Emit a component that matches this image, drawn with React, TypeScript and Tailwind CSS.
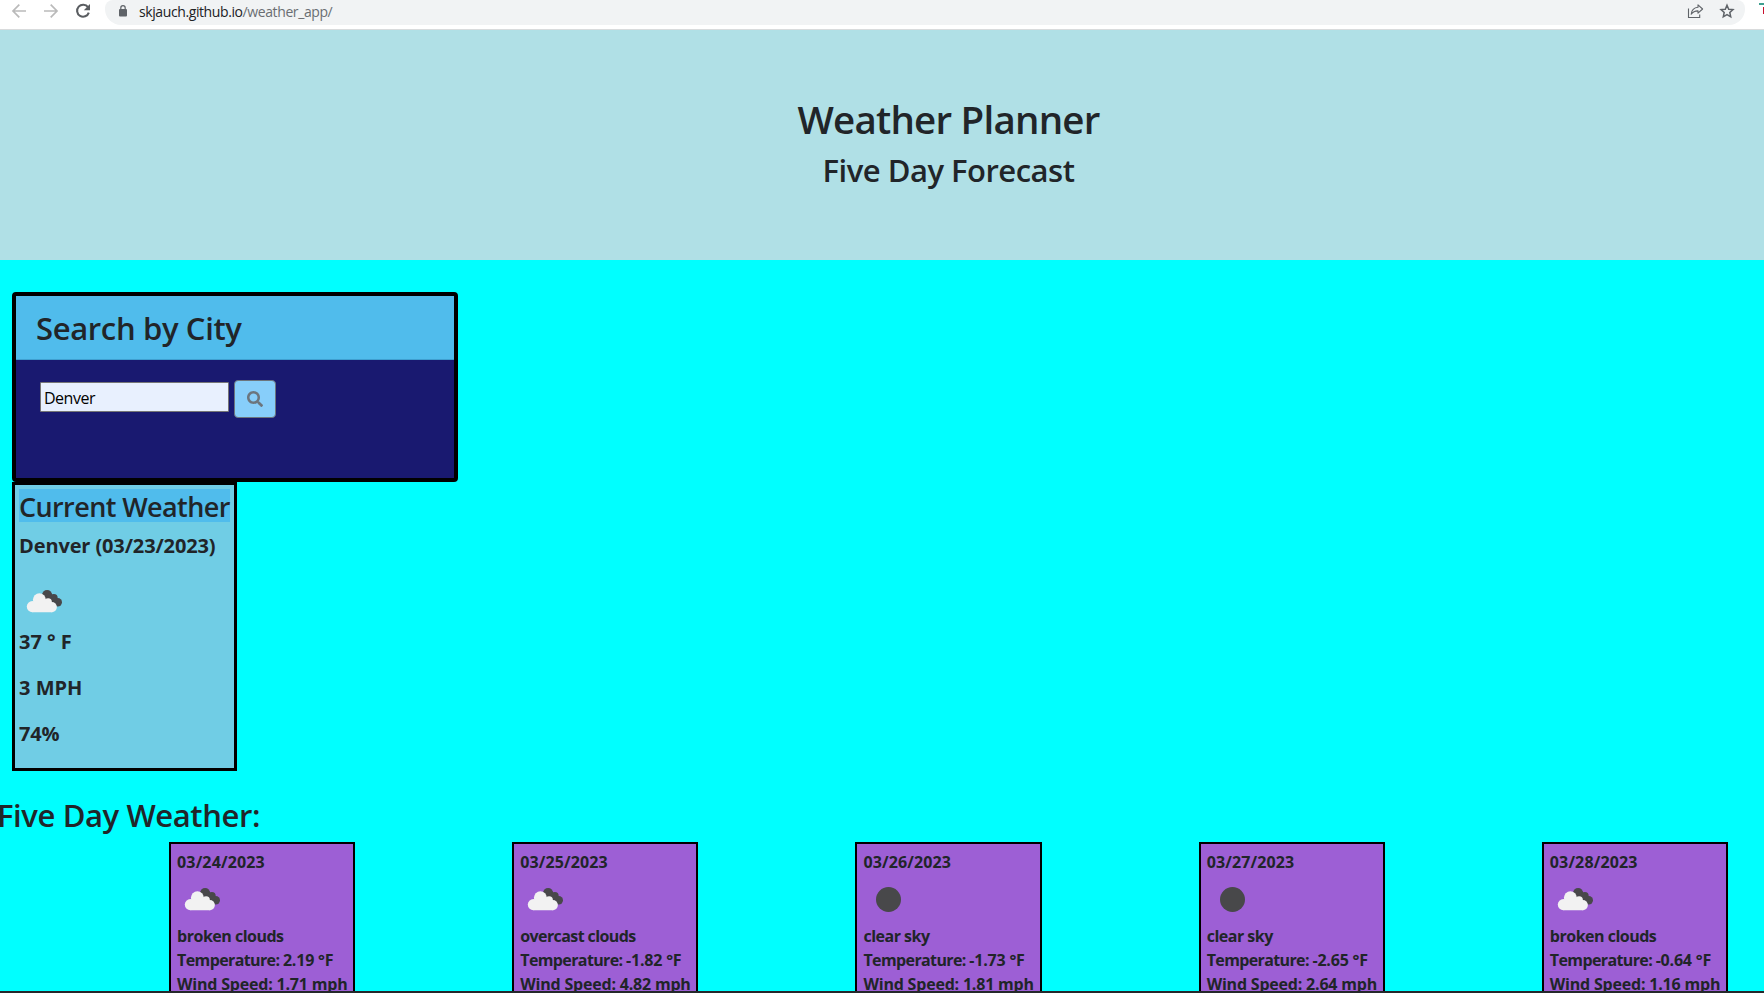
import { FaSearch } from "react-icons/fa";

type Sky = "clouds" | "clear";

interface Day {
  date: string;
  sky: Sky;
  description: string;
  descriptionTracking: string;
  temperature: string;
  wind: string;
}

const days: Day[] = [
  { date: "03/24/2023", sky: "clouds", description: "broken clouds", descriptionTracking: "tracking-[-0.5px]", temperature: "2.19", wind: "1.71" },
  { date: "03/25/2023", sky: "clouds", description: "overcast clouds", descriptionTracking: "tracking-[-0.6px]", temperature: "-1.82", wind: "4.82" },
  { date: "03/26/2023", sky: "clear", description: "clear sky", descriptionTracking: "tracking-[-0.5px]", temperature: "-1.73", wind: "1.81" },
  { date: "03/27/2023", sky: "clear", description: "clear sky", descriptionTracking: "tracking-[-0.5px]", temperature: "-2.65", wind: "2.64" },
  { date: "03/28/2023", sky: "clouds", description: "broken clouds", descriptionTracking: "tracking-[-0.5px]", temperature: "-0.64", wind: "1.16" },
];

function SkyIcon({ sky }: { sky: Sky }) {
  return (
    <svg width="50" height="50" viewBox="-0.8 0 50 50" className="block">
      {sky === "clear" ? (
        <circle cx="24.7" cy="25.5" r="12.5" fill="#48484a" />
      ) : (
        <>
          <g fill="#48484a">
            <circle cx="27.3" cy="19.1" r="5.1" />
            <circle cx="34" cy="22" r="3.9" />
            <circle cx="38" cy="26.2" r="4.2" />
            <path d="M25 20h10l4 10h-6z" />
          </g>
          <g fill="#f2f2f2">
            <circle cx="12.6" cy="30.6" r="5.6" />
            <circle cx="19.6" cy="23.8" r="6.5" />
            <circle cx="28.3" cy="26" r="3.8" />
            <circle cx="32" cy="31.1" r="5.1" />
            <path d="M12.6 27l6-2 9 0 5 6v5.2h-20z" />
          </g>
        </>
      )}
    </svg>
  );
}

function Toolbar() {
  return (
    <div className="flex h-[30px] shrink-0 items-start border-b border-[#d9dbdc] bg-white pl-[11px]">
      <svg width="16" height="16" viewBox="0 0 16 16" fill="none" stroke="#bababa" strokeWidth="1.7" className="mt-[3px]">
        <path d="M15 8H2.2M8.3 1.7 2 8l6.3 6.3" />
      </svg>
      <svg width="16" height="16" viewBox="0 0 16 16" fill="none" stroke="#bababa" strokeWidth="1.7" className="mt-[3px] ml-4">
        <path d="M1 8h12.8M7.7 1.7 14 8l-6.3 6.3" />
      </svg>
      <svg width="16" height="16" viewBox="0 0 16 16" className="mt-[3px] ml-4">
        <path d="M13 4.2A6 6 0 1 0 13.8 9.6" fill="none" stroke="#5a5d61" strokeWidth="2.1" />
        <path d="M15 1v6.2H8.8z" fill="#5a5d61" />
      </svg>
      <div className="ml-[14px] flex h-[25px] w-[1640px] items-start rounded-b-[16px] rounded-tl-[8px] rounded-tr-[8px] bg-[#f1f3f4] pl-[14px]">
        <svg width="8" height="12" viewBox="0 0 8 12" className="mt-[5px]">
          <rect y="4" width="8" height="7.5" rx="1" fill="#5f6368" />
          <path d="M1.8 5V2.9a2.2 2.2 0 0 1 4.4 0V5" fill="none" stroke="#5f6368" strokeWidth="1.2" />
        </svg>
        <div className="ml-3 text-[14px] leading-[23px] tracking-[-0.4px] text-[#6a6e72]">
          <span className="text-[#202124]">skjauch.github.io</span>/weather_app/
        </div>
        <div className="mr-[10px] ml-auto flex gap-[15px]">
          <svg width="17" height="16" viewBox="0 0 17 16" fill="none" stroke="#5f6368" strokeWidth="1.1" className="mt-[4px]">
            <path d="M1.500 4.500V13.500h11.200v-3" />
            <path d="M11 .8 15.600 5 11 9.200V6.900C8 6.800 6 7.800 4.200 10.200 4.600 6.200 7 3.700 11 3.300z" strokeLinejoin="round" />
          </svg>
          <svg width="16" height="16" viewBox="0 0 16 16" fill="none" stroke="#5f6368" strokeWidth="1.5" className="mt-[3px]">
            <path d="M8 2.200l1.700 4 4.300.4-3.200 2.900.9 4.300L8 11.600l-3.700 2.200.9-4.300L2 6.600l4.300-.4z" />
          </svg>
        </div>
      </div>
      <div className="mt-[3px] ml-auto flex w-[5px] flex-col items-end">
        <div className="h-0.5 w-full bg-[#3f9f8f]" />
        <div className="mt-0.5 h-[7px] w-px bg-[#c8102e]" />
      </div>
    </div>
  );
}

function SearchCard() {
  return (
    <section className="mt-8 ml-3 h-[190px] w-[446px] overflow-hidden rounded border-4 border-black bg-[#191970]">
      <div className="h-16 border-b border-[#3f9fd0] bg-[#50bcec] pt-[13px] pl-5">
        <h2 className="text-[31px] leading-[38px] font-semibold tracking-[-0.35px]">Search by City</h2>
      </div>
      <div className="flex items-start pt-5 pl-6">
        <input
          defaultValue="Denver"
          className="mt-0.5 h-[30px] w-[189px] rounded-[1px] border border-[#767676] bg-[#e8f0fe] px-[3px] pt-px text-[16px] tracking-[-0.5px] text-black outline-none"
        />
        <button className="ml-[5px] flex h-[38px] w-[42px] items-center justify-center rounded border border-[#6c757d] bg-[#87cefa] text-[#6c757d]">
          <FaSearch size={16} />
        </button>
      </div>
    </section>
  );
}

function CurrentWeather() {
  return (
    <section className="ml-3 h-[289px] w-[225px] border-3 border-black bg-[#70cde5] p-1 text-[20px] leading-[32px] font-bold whitespace-nowrap">
      <h3 className="mb-2 h-[33px] bg-[#50bcec] text-[27px] leading-[36px] font-semibold tracking-[-0.6px]">Current Weather</h3>
      <p className="mb-4 h-[30px] tracking-[-0.12px]">Denver (03/23/2023)</p>
      <SkyIcon sky="clouds" />
      <p className="mb-4 h-[30px]">37 ° F</p>
      <p className="mb-4 h-[30px]">3 MPH</p>
      <p className="h-[30px] tracking-[-0.2px]">74%</p>
    </section>
  );
}

function DayCard({ day }: { day: Day }) {
  return (
    <article className="h-[190px] w-[186.2px] border-2 border-black bg-[#9d5fd5] p-1.5 text-[16px] leading-6 font-bold whitespace-nowrap">
      <p className="tracking-[0.12px]">{day.date}</p>
      <SkyIcon sky={day.sky} />
      <p className={day.descriptionTracking}>{day.description}</p>
      <p className="tracking-[-0.2px]">
        <span className="tracking-[-0.62px]">Temperature: </span>
        {day.temperature} °F
      </p>
      <p className="tracking-[-0.2px]">Wind Speed: {day.wind} mph</p>
    </article>
  );
}

export default function App() {
  return (
    <div className="flex h-[993px] w-[1764px] flex-col overflow-hidden bg-[#00ffff] font-['Open_Sans','Noto_Sans',sans-serif] text-[#212529]">
      <Toolbar />
      <div className="flex min-h-0 flex-1 flex-col overflow-hidden">
        <header className="h-[230px] shrink-0 bg-[#b0e0e6] pt-[65px] pl-[133px] text-center font-semibold">
          <h1 className="mb-2 text-[38.5px] leading-[48px] tracking-[-0.78px]">Weather Planner</h1>
          <h2 className="text-[31px] leading-[38px] tracking-[-0.5px]">Five Day Forecast</h2>
        </header>
        <main className="min-h-0 flex-1 overflow-hidden">
          <SearchCard />
          <CurrentWeather />
          <h2 className="mt-[25px] mb-2 -ml-[3px] text-[31px] leading-[38px] font-semibold tracking-[-0.4px]">Five Day Weather:</h2>
          <div className="grid grid-cols-[repeat(5,343.2px)] pl-[169.1px]">
            {days.map((day) => (
              <DayCard key={day.date} day={day} />
            ))}
          </div>
        </main>
      </div>
      <div className="h-0.5 shrink-0 bg-[#25282b]" />
    </div>
  );
}
